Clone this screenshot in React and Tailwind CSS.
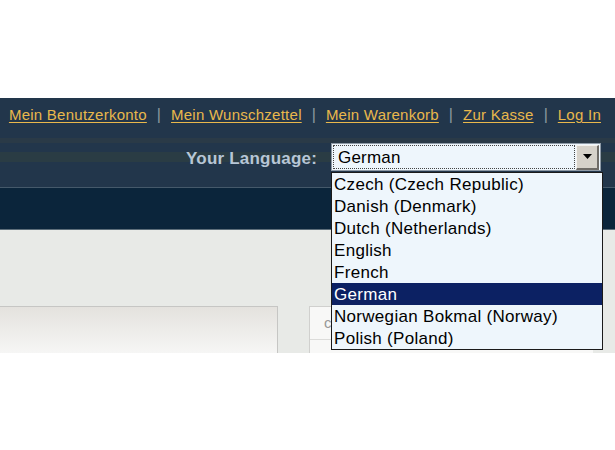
const LINKS = ["Mein Benutzerkonto", "Mein Wunschzettel", "Mein Warenkorb", "Zur Kasse", "Log In"];

const LANGUAGES = [
  "Czech (Czech Republic)",
  "Danish (Denmark)",
  "Dutch (Netherlands)",
  "English",
  "French",
  "German",
  "Norwegian Bokmal (Norway)",
  "Polish (Poland)",
];

export default function App() {
  return (
    <div className="w-[615px] h-[450px] bg-white overflow-hidden font-['Liberation_Sans',Arial,sans-serif]">
      <div className="h-[98px]" />
      {/* header */}
      <div className="relative bg-[#22364b]">
        <div className="h-[40px] flex items-center justify-end pr-[14px] gap-[10px] text-[15px] pb-[6px]">
          {LINKS.map((l, i) => (
            <div key={l} className="flex items-center gap-[10px]">
              {i > 0 && <span className="text-[#8a96a0] text-[16px]">|</span>}
              <a className="text-[#e9b84c] underline underline-offset-[2px] decoration-[1px] tracking-[0.25px]">{l}</a>
            </div>
          ))}
        </div>
        <div className="h-[5px] bg-[#2a3a47]" />
        <div className="h-[9px]" />
        <div className="h-[10px] bg-[#2a3c44]" />
        <div className="h-[25px]" />
        <div className="h-px bg-[#45596a]" />
        {/* language selector */}
        <div className="absolute right-[14px] top-[45px] flex items-start gap-[14px]">
          <span className="mt-[3px] text-[17px] font-bold text-[#b7c6d6] tracking-[0.2px]">Your Language:</span>
          <div className="relative w-[270px]">
            <div className="h-[28px] border border-[#8e9aa6] bg-[#eef6fc] flex items-center p-[1px]">
              <div className="flex-1 h-full border border-dotted border-[#444] flex items-center pl-[4px] pt-[1px] text-[17px] text-black tracking-[0.2px]">
                German
              </div>
              <div className="w-[23px] h-[25px] ml-[1px] bg-[#d6d2ca] border-t border-l border-t-[#f4f2ee] border-l-[#f4f2ee] border-r-2 border-b-2 border-r-[#6f6c67] border-b-[#6f6c67] flex items-center justify-center">
                <svg width="9" height="5" viewBox="0 0 9 5"><path d="M0 0h9L4.5 5z" fill="#000" /></svg>
              </div>
            </div>
            {/* dropdown list */}
            <div className="absolute left-0 top-[29px] w-[272px] border border-[#1a1a1a] bg-[#eef6fc] z-10">
              {LANGUAGES.map((lang) => (
                <div
                  key={lang}
                  className={
                    "h-[22px] flex items-center pl-[2px] pt-[1px] text-[17px] tracking-[0.3px] " +
                    (lang === "German" ? "bg-[#0c2163] text-white" : "text-black")
                  }
                >
                  {lang}
                </div>
              ))}
            </div>
          </div>
        </div>
      </div>
      {/* nav bar */}
      <div className="h-[41px] bg-[#0b253b]" />
      <div className="h-px bg-[#5d6e7a]" />
      {/* content */}
      <div className="h-[123px] bg-[#e8eae7] pt-[76px] flex gap-[31px]">
        <div className="w-[278px] h-[47px] border-t border-r border-[#c6c6c4] bg-gradient-to-b from-[#e4e2de] to-[#f6f6f5]" />
        <div className="w-[284px] h-[47px] border-t border-l border-[#d0d0ce] bg-[#f8f8f7] flex flex-col">
          <div className="h-[33px] border-b border-[#dcdcda] flex items-center pl-[14px] text-[15px] text-[#999]">c</div>
        </div>
      </div>
    </div>
  );
}
